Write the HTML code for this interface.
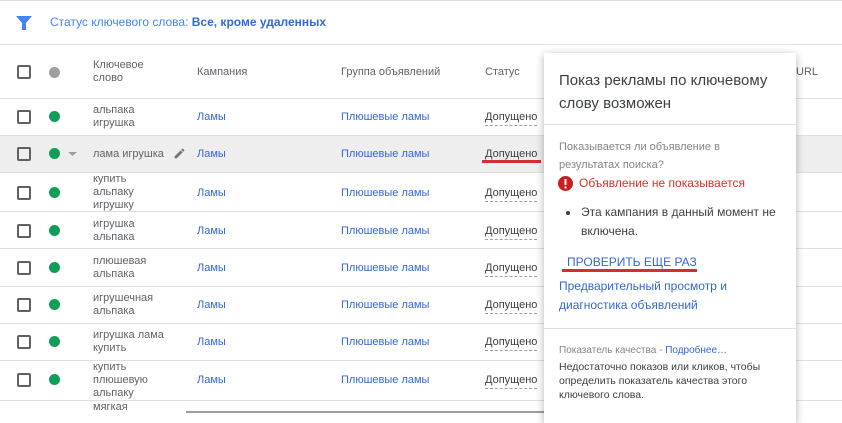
<!DOCTYPE html>
<html><head><meta charset="utf-8"><style>
*{margin:0;padding:0;box-sizing:border-box}
body{width:842px;height:413px;overflow:hidden;background:#fff;font-family:"Liberation Sans",sans-serif;font-size:11px;color:#3c4043;position:relative}
.a{position:absolute}
.hl{position:absolute;left:0;width:842px;height:1px;background:#e0e0e0}
.cb{position:absolute;left:17px;width:14px;height:14px;border:2px solid #616161;border-radius:2px}
.dot{position:absolute;left:49px;width:11px;height:11px;border-radius:50%;background:#0f9d58}
.kw{position:absolute;left:93px;line-height:13px;color:#5f6368}
.lk{position:absolute;color:#3367d6}
.st{position:absolute;left:485px;color:#3c4043;border-bottom:1px dashed #9e9e9e;padding-bottom:2px}
.pop{position:absolute;left:544px;top:53px;width:252px;height:370px;background:#fff;box-shadow:0 2px 8px rgba(0,0,0,.3)}
</style></head><body>
<div class="hl" style="top:0"></div>
<svg class="a" style="left:16px;top:15px" width="16" height="16" viewBox="0 0 16 16"><path d="M0 1h16L10 8v7H6V8z" fill="#4285f4"/></svg>
<div class="a" style="left:50px;top:15px;font-size:12px;color:#4285f4">Статус ключевого слова: <b style="color:#3367d6">Все, кроме удаленных</b></div>
<div class="hl" style="top:44px"></div>
<div class="cb" style="top:65px"></div>
<div class="dot" style="top:67px;background:#9e9e9e"></div>
<div class="kw" style="top:59px">Ключевое<br>слово</div>
<div class="a" style="left:197px;top:66px;color:#5f6368">Кампания</div>
<div class="a" style="left:341px;top:66px;color:#5f6368">Группа объявлений</div>
<div class="a" style="left:485px;top:66px;color:#5f6368">Статус</div>
<div class="a" style="left:796px;top:66px;color:#5f6368">URL</div>
<div class="hl" style="top:98px"></div>
<div class="a" style="left:0;top:136px;width:842px;height:36px;background:#eeeeee"></div>
<!-- rows -->
<div class="cb" style="top:110px"></div><div class="dot" style="top:111px"></div><div class="kw" style="top:104px">альпака<br>игрушка</div><div class="lk" style="left:197px;top:111px">Ламы</div><div class="lk" style="left:341px;top:111px">Плюшевые ламы</div><div class="st" style="top:111px">Допущено</div>
<div class="hl" style="top:135px"></div>
<div class="cb" style="top:147px"></div><div class="dot" style="top:148px"></div>
<svg class="a" style="left:68px;top:152px" width="9" height="5"><path d="M0 0h9L4.5 4z" fill="#9e9e9e"/></svg>
<div class="kw" style="top:148px">лама игрушка</div>
<svg class="a" style="left:173px;top:147px" width="13" height="13" viewBox="0 0 24 24"><path d="M3 17.25V21h3.75L17.8 9.94l-3.75-3.75zM20.7 7.04a1 1 0 000-1.41l-2.34-2.34a1 1 0 00-1.41 0l-1.83 1.83 3.75 3.75z" fill="#757575"/></svg>
<div class="lk" style="left:197px;top:148px">Ламы</div><div class="lk" style="left:341px;top:148px">Плюшевые ламы</div><div class="a" style="left:485px;top:148px">Допущено</div>
<div class="a" style="left:482px;top:160px;width:59px;height:3px;background:#d32f2f"></div>
<div class="hl" style="top:172px"></div>
<div class="cb" style="top:186px"></div><div class="dot" style="top:187px"></div><div class="kw" style="top:173px">купить<br>альпаку<br>игрушку</div><div class="lk" style="left:197px;top:187px">Ламы</div><div class="lk" style="left:341px;top:187px">Плюшевые ламы</div><div class="st" style="top:187px">Допущено</div>
<div class="hl" style="top:211px"></div>
<div class="cb" style="top:224px"></div><div class="dot" style="top:225px"></div><div class="kw" style="top:218px">игрушка<br>альпака</div><div class="lk" style="left:197px;top:225px">Ламы</div><div class="lk" style="left:341px;top:225px">Плюшевые ламы</div><div class="st" style="top:225px">Допущено</div>
<div class="hl" style="top:248px"></div>
<div class="cb" style="top:261px"></div><div class="dot" style="top:262px"></div><div class="kw" style="top:255px">плюшевая<br>альпака</div><div class="lk" style="left:197px;top:262px">Ламы</div><div class="lk" style="left:341px;top:262px">Плюшевые ламы</div><div class="st" style="top:262px">Допущено</div>
<div class="hl" style="top:286px"></div>
<div class="cb" style="top:298px"></div><div class="dot" style="top:299px"></div><div class="kw" style="top:292px">игрушечная<br>альпака</div><div class="lk" style="left:197px;top:299px">Ламы</div><div class="lk" style="left:341px;top:299px">Плюшевые ламы</div><div class="st" style="top:299px">Допущено</div>
<div class="hl" style="top:323px"></div>
<div class="cb" style="top:335px"></div><div class="dot" style="top:336px"></div><div class="kw" style="top:329px">игрушка лама<br>купить</div><div class="lk" style="left:197px;top:336px">Ламы</div><div class="lk" style="left:341px;top:336px">Плюшевые ламы</div><div class="st" style="top:336px">Допущено</div>
<div class="hl" style="top:360px"></div>
<div class="cb" style="top:373px"></div><div class="dot" style="top:374px"></div><div class="kw" style="top:361px">купить<br>плюшевую<br>альпаку</div><div class="lk" style="left:197px;top:374px">Ламы</div><div class="lk" style="left:341px;top:374px">Плюшевые ламы</div><div class="st" style="top:374px">Допущено</div>
<div class="hl" style="top:400px"></div>
<div class="kw" style="top:401px">мягкая</div>
<div class="a" style="left:186px;top:411px;width:360px;height:2px;background:#9e9e9e"></div>
<!-- popup -->
<div class="pop">
 <div class="a" style="left:15px;top:16px;font-size:15px;line-height:23px;color:#3c4043">Показ рекламы по ключевому<br>слову возможен</div>
 <div class="a" style="left:0;top:71px;width:252px;height:1px;background:#e0e0e0"></div>
 <div class="a" style="left:15px;top:85px;font-size:11px;line-height:18px;color:#80868b">Показывается ли объявление в<br>результатах поиска?</div>
 <svg class="a" style="left:14px;top:123px" width="15" height="15"><circle cx="7.5" cy="7.5" r="7.5" fill="#c5221f"/><rect x="6.5" y="3" width="2" height="6" fill="#fff"/><rect x="6.5" y="10.5" width="2" height="2" fill="#fff"/></svg>
 <div class="a" style="left:35px;top:123px;font-size:12px;color:#d93025">Объявление не показывается</div>
 <div class="a" style="left:22px;top:158px;width:4px;height:4px;border-radius:50%;background:#3c4043"></div>
 <div class="a" style="left:37px;top:150px;font-size:12px;line-height:19px;color:#3c4043">Эта кампания в данный момент не<br>включена.</div>
 <div class="a" style="left:23px;top:202px;font-size:12px;color:#3367d6">ПРОВЕРИТЬ ЕЩЕ РАЗ</div>
 <div class="a" style="left:18px;top:216px;width:135px;height:3px;background:#d32f2f"></div>
 <div class="a" style="left:15px;top:224px;font-size:12px;line-height:19px;color:#3367d6">Предварительный просмотр и<br>диагностика объявлений</div>
 <div class="a" style="left:0;top:275px;width:252px;height:1px;background:#e0e0e0"></div>
 <div class="a" style="left:15px;top:292px;font-size:10px;color:#80868b">Показатель качества - <span style="color:#3367d6">Подробнее…</span></div>
 <div class="a" style="left:15px;top:307px;font-size:10.5px;line-height:14px;color:#3c4043">Недостаточно показов или кликов, чтобы<br>определить показатель качества этого<br>ключевого слова.</div>
</div>
</body></html>
